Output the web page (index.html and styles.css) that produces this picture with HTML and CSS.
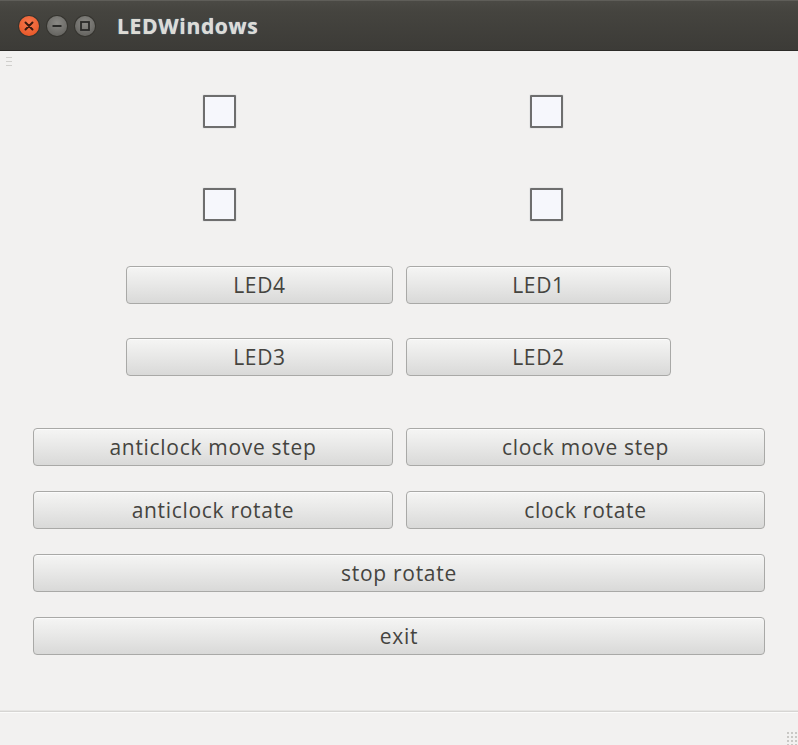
FILE: index.html
```html
<!DOCTYPE html>
<html>
<head>
<meta charset="utf-8">
<link rel="stylesheet" href="styles.css">
<title>LEDWindows</title>
</head>
<body>
<div class="window">
  <header class="titlebar">
    <div class="controls">
      <span class="ctl close"><svg width="20" height="20" viewBox="0 0 20 20"><path d="M6.5 6.5 L13.5 13.5 M13.5 6.5 L6.5 13.5" stroke="#3a1a10" stroke-width="2" stroke-linecap="round"/></svg></span>
      <span class="ctl"><svg width="20" height="20" viewBox="0 0 20 20"><path d="M5.5 10 H14.5" stroke="#2a2a28" stroke-width="2"/></svg></span>
      <span class="ctl"><svg width="20" height="20" viewBox="0 0 20 20"><rect x="6" y="6" width="8" height="8" fill="none" stroke="#2a2a28" stroke-width="1.8"/></svg></span>
    </div>
    <h1 class="title">LEDWindows</h1>
  </header>
  <main class="content">
    <div class="grip"></div>
    <div class="checks">
      <span class="cb"></span><span class="cb"></span>
      <span class="cb"></span><span class="cb"></span>
    </div>
    <div class="leds">
      <button class="btn">LED4</button><button class="btn">LED1</button>
      <button class="btn">LED3</button><button class="btn">LED2</button>
    </div>
    <div class="moves">
      <button class="btn">anticlock move step</button><button class="btn">clock move step</button>
      <button class="btn">anticlock rotate</button><button class="btn">clock rotate</button>
      <button class="btn wide gap-s">stop rotate</button>
      <button class="btn wide">exit</button>
    </div>
  </main>
  <footer class="status"><span class="resize"></span></footer>
</div>
</body>
</html>
```
FILE: styles.css
```css
* { box-sizing: border-box; }
html, body { margin: 0; padding: 0; }
body {
  width: 798px;
  height: 745px;
  background: #f2f1f0;
  font-family: "Open Sans", "DejaVu Sans", sans-serif;
  overflow: hidden;
}
.window { display: flex; flex-direction: column; height: 745px; }
.titlebar {
  height: 51px;
  flex: none;
  background: linear-gradient(#4b4a45 0px, #45443f 10px, #3c3b37 100%);
  border-top: 1px solid #5f5e59;
  border-bottom: 1px solid #2c2b28;
  display: flex;
  align-items: center;
  padding-left: 19px;
}
.controls { display: flex; gap: 8px; }
.ctl {
  width: 20px; height: 20px; border-radius: 50%;
  background: radial-gradient(circle at 50% 35%, #8a8985, #5c5b57);
  box-shadow: 0 0 0 1px #35342f;
  display: block;
}
.ctl svg { display: block; }
.close { background: radial-gradient(circle at 50% 35%, #f8794f, #e4501f); }
.title {
  margin: 0 0 0 22px;
  font-size: 21px;
  font-weight: 700;
  color: #dfdbd2;
  letter-spacing: 0.7px;
  text-shadow: 0 0 1px #7fc3ff;
}
.content { flex: 1; position: relative; }
.grip {
  position: absolute; left: 6px; top: 6px; width: 6px; height: 12px;
  background: repeating-linear-gradient(#d0cfcc 0 1px, transparent 1px 4px);
}
.checks {
  display: grid;
  grid-template-columns: 33px 33px;
  column-gap: 294px;
  row-gap: 60px;
  padding: 44px 0 0 203px;
}
.cb {
  width: 33px; height: 33px;
  border: 2.5px solid #6e6e6e;
  background: #f6f7fc;
  border-radius: 1px;
  box-shadow: 0 0 0 1px #e8e8e8;
}
.leds {
  display: grid;
  grid-template-columns: 267px 265px;
  column-gap: 13px;
  row-gap: 34px;
  padding: 45px 0 0 126px;
}
.moves {
  display: grid;
  grid-template-columns: 360px 359px;
  column-gap: 13px;
  row-gap: 25px;
  padding: 52px 0 0 33px;
}
.wide { grid-column: 1 / 3; }
.gap-s { margin-top: -1px; }
.btn {
  height: 38px;
  margin: 0;
  padding: 0;
  border: 1px solid #a9a9a7;
  border-radius: 4px;
  background: linear-gradient(#f5f5f4 0%, #e9e9e8 45%, #d9d9d8 100%);
  box-shadow: inset 0 1px 0 #fbfbfb;
  font-family: "Open Sans", "DejaVu Sans", sans-serif;
  font-size: 21px;
  letter-spacing: 0.7px;
  color: #45443f;
  text-align: center;
  line-height: 34px;
}
.status {
  height: 34px;
  flex: none;
  border-top: 1px solid #d6d5d3;
  box-shadow: inset 0 1px 0 #fbfbfa, 0 -1px 0 #e6e5e3;
  position: relative;
}
.resize {
  position: absolute; right: 0; bottom: 0; width: 12px; height: 14px;
  background: radial-gradient(circle, #c9c8c5 1px, transparent 1.3px) 0 0 / 4px 4px;
}
```
